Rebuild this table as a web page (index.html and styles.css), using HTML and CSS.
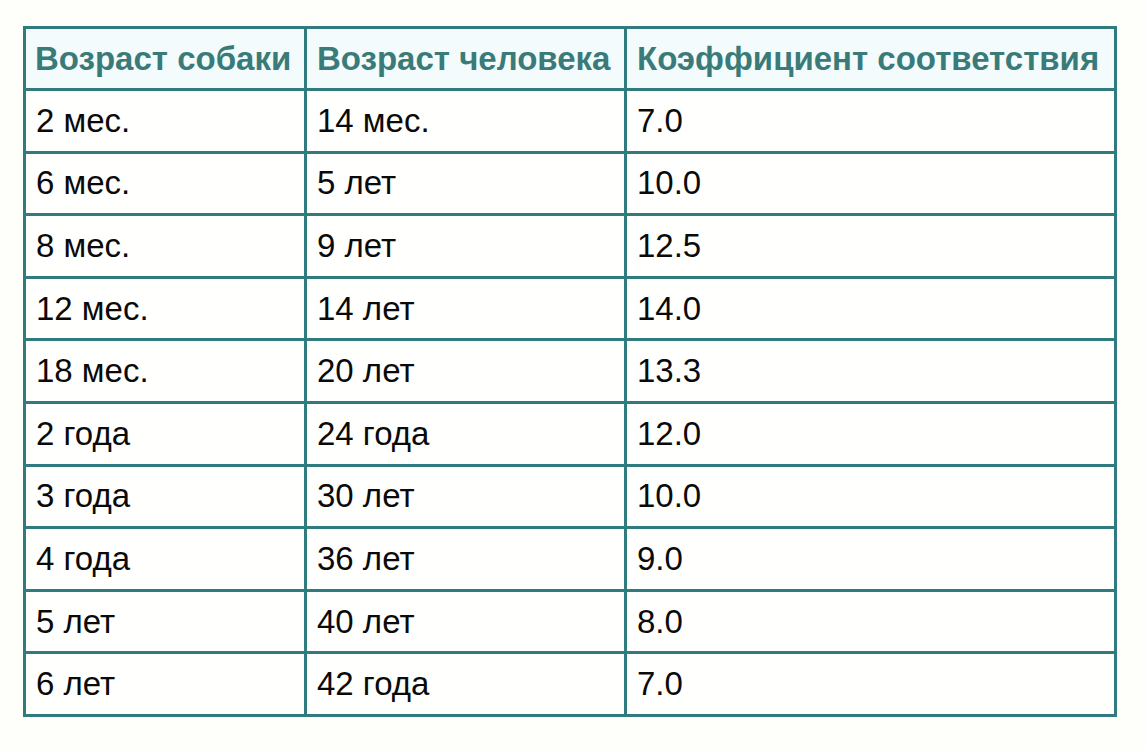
FILE: index.html
```html
<!DOCTYPE html>
<html lang="ru">
<head>
<meta charset="utf-8">
<link rel="stylesheet" href="styles.css">
</head>
<body>
<table class="age-table">
  <thead>
    <tr><th class="c1">Возраст собаки</th><th class="c2">Возраст человека</th><th class="c3">Коэффициент соответствия</th></tr>
  </thead>
  <tbody>
    <tr><td>2 мес.</td><td>14 мес.</td><td>7.0</td></tr>
    <tr><td>6 мес.</td><td>5 лет</td><td>10.0</td></tr>
    <tr><td>8 мес.</td><td>9 лет</td><td>12.5</td></tr>
    <tr><td>12 мес.</td><td>14 лет</td><td>14.0</td></tr>
    <tr><td>18 мес.</td><td>20 лет</td><td>13.3</td></tr>
    <tr><td>2 года</td><td>24 года</td><td>12.0</td></tr>
    <tr><td>3 года</td><td>30 лет</td><td>10.0</td></tr>
    <tr><td>4 года</td><td>36 лет</td><td>9.0</td></tr>
    <tr><td>5 лет</td><td>40 лет</td><td>8.0</td></tr>
    <tr><td>6 лет</td><td>42 года</td><td>7.0</td></tr>
  </tbody>
</table>
</body>
</html>
```
FILE: styles.css
```css
html, body {
  margin: 0;
  padding: 0;
  background: #fefefb;
}
body {
  padding: 26px 0 0 23px;
  font-family: "Liberation Sans", Arial, sans-serif;
}
.age-table {
  border-collapse: collapse;
  width: 1094px;
  table-layout: fixed;
}
.age-table th,
.age-table td {
  border: 3px solid #2f7b7d;
  text-align: left;
  padding: 0 8px 0 10px;
  white-space: nowrap;
  overflow: hidden;
}
.age-table th {
  height: 59px;
  background: #f3fbfc;
  color: #3a7b79;
  font-weight: bold;
  font-size: 33px;
}
.age-table td {
  height: 59.6px;
  background: #fffffe;
  color: #0a0a0a;
  font-size: 33px;
}
.c1 { width: 261px; }
.c2 { width: 299px; }
.c3 { width: auto; }
.age-table th.c1 { padding-left: 9px; }
```
